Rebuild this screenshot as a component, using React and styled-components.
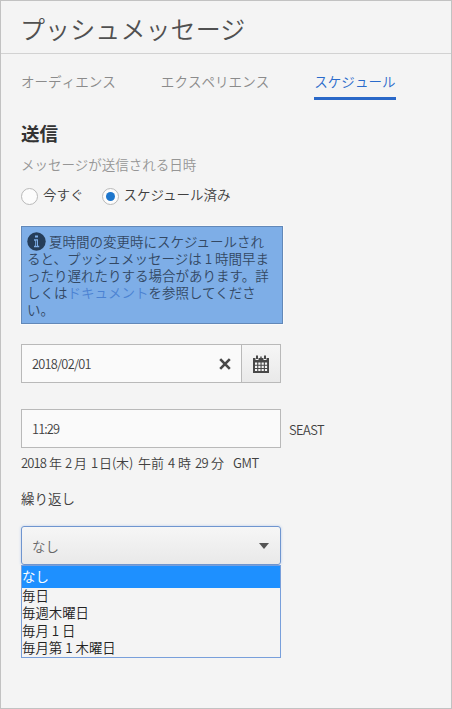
import React from "react";
import styled, { createGlobalStyle } from "styled-components";

const GlobalStyle = createGlobalStyle`
  * { box-sizing: border-box; }
  body {
    margin: 0;
    background: #f4f4f4;
    font-family: "Noto Sans CJK JP", sans-serif;
    font-size: 13.5px;
    font-weight: 350;
    color: #404040;
  }
`;

const Panel = styled.main`
  width: 452px;
  height: 709px;
  background: #f4f4f4;
  border: 1px solid #c2c2c2;
  overflow: hidden;
`;

const Header = styled.header`
  height: 53px;
  padding-left: 19px;
  border-bottom: 1px solid #d2d2d2;
`;

const Title = styled.h1`
  margin: 0;
  font-size: 25px;
  font-weight: 350;
  line-height: 55px;
  letter-spacing: 0.1px;
  color: #505050;
`;

const Tabs = styled.nav`
  display: flex;
  gap: 45px;
  height: 47px;
  padding: 15px 0 0 20px;
`;

const Tab = styled.a`
  height: 31px;
  line-height: 25px;
  font-size: 13.55px;
  font-kerning: none;
  white-space: nowrap;
  color: ${(p) => (p.$active ? "#2a6bcb" : "#8b8b8b")};
  border-bottom: ${(p) => (p.$active ? "3px solid #2a68c8" : "none")};
`;

const Content = styled.section`
  display: flex;
  flex-direction: column;
  align-items: flex-start;
  padding-left: 20px;
`;

const Heading = styled.h2`
  margin: 19px 0 0;
  font-size: 18.5px;
  font-weight: 700;
  line-height: 26px;
  color: #333;
`;

const Caption = styled.p`
  margin: 5px 0 0;
  line-height: 26px;
  color: #969696;
`;

const RadioRow = styled.div`
  display: flex;
  gap: 18px;
  height: 26px;
  margin-top: 5px;
`;

const RadioLabel = styled.label`
  display: flex;
  gap: 5px;
  line-height: 25px;
`;

const RadioMark = styled.span`
  display: flex;
  align-items: center;
  justify-content: center;
  width: 17px;
  height: 17px;
  margin-top: 6px;
  border: 1px solid #b9b9b9;
  border-radius: 50%;
  background: #fcfcfc;

  &::after {
    content: "";
    width: 9px;
    height: 9px;
    border-radius: 50%;
    background: ${(p) => (p.$checked ? "#1d76cc" : "transparent")};
  }
`;

const Notice = styled.div`
  width: 262px;
  height: 98px;
  margin-top: 18px;
  padding: 6px 5px;
  border: 1px solid #6288b8;
  background: #7eaee7;
  line-height: 17px;
  color: #334863;
  outline: 1px solid #fafafa;
`;

const NoticeLine = styled.div`
  display: flex;
  height: 17px;
  white-space: nowrap;
`;

const InfoIcon = styled.svg`
  flex: none;
  width: 19px;
  height: 19px;
  margin: -1px 3px 0 0;
`;

const NoticeLink = styled.a`
  color: #4b82d2;
`;

const Field = styled.div`
  display: flex;
  width: 260px;
  height: 39px;
  border: 1px solid #b9b9b9;
  background: #fafafa;
`;

const DateField = styled(Field)`
  margin-top: 20px;
`;

const FieldValue = styled.span`
  flex: 1;
  padding-left: 10px;
  line-height: 38px;
  font-size: 12.8px;
  letter-spacing: ${(p) => p.$tracking};
`;

const ClearIcon = styled.svg`
  width: 12px;
  height: 12px;
  margin: 13px 10px 0 0;
`;

const CalendarButton = styled.button`
  display: flex;
  align-items: center;
  justify-content: center;
  width: 39px;
  height: 37px;
  padding: 0;
  border: 0;
  border-left: 1px solid #b9b9b9;
  background: linear-gradient(#f6f6f6, #e9e9e9);
`;

const TimeRow = styled.div`
  display: flex;
  gap: 8px;
  height: 39px;
  margin-top: 26px;
`;

const Zone = styled.span`
  font-size: 12.8px;
  line-height: 41px;
  letter-spacing: -0.5px;
`;

const Summary = styled.p`
  display: flex;
  height: 24px;
  margin: 3px 0 0;
  font-size: 13px;
  line-height: 24px;
  white-space: pre;
`;

const SummaryPart = styled.span`
  width: ${(p) => p.$width}px;
  letter-spacing: ${(p) => p.$tracking || "0"};
`;

const RepeatLabel = styled.label`
  margin-top: 10px;
  line-height: 26px;
`;

const SelectButton = styled.div`
  display: flex;
  align-items: center;
  justify-content: space-between;
  width: 260px;
  height: 39px;
  margin-top: 15px;
  padding: 0 11px 0 10px;
  border: 1px solid #6f95cf;
  border-radius: 3px;
  box-shadow: 0 0 3px #b9cdec;
  background: linear-gradient(#f6f6f6, #e9e9e9);
  color: #666;
`;

const Options = styled.ul`
  width: 260px;
  height: 93px;
  margin: 0;
  padding: 0;
  list-style: none;
  border: 1px solid #789fdb;
  background: #f4f4f4;
  color: #222;
`;

const Option = styled.li`
  height: ${(p) => (p.$selected ? 22 : 17.3)}px;
  line-height: ${(p) => (p.$selected ? 20 : 15)}px;
  font-size: 13.4px;
  white-space: pre;
  background: ${(p) => (p.$selected ? "#1e90ff" : "transparent")};
  color: ${(p) => (p.$selected ? "#fff" : "inherit")};
  font-weight: ${(p) => (p.$selected ? 400 : 350)};
`;

const summary = [
  { text: "2018", width: 28, tracking: "-0.9px" },
  { text: "年", width: 16 },
  { text: "2", width: 9 },
  { text: "月", width: 17 },
  { text: "1", width: 8 },
  { text: "日(木)", width: 39, tracking: "-0.1px" },
  { text: "午前", width: 30 },
  { text: "4", width: 10 },
  { text: "時", width: 17 },
  { text: "29", width: 16, tracking: "-0.6px" },
  { text: "分", width: 22 },
  { text: "GMT", width: 30, tracking: "-0.4px" },
];

const repeatOptions = ["なし", "毎日", "毎週木曜日", "毎月 1 日", "毎月第 1 木曜日"];

export default function App() {
  return (
    <>
      <GlobalStyle />
      <Panel>
        <Header>
          <Title>プッシュメッセージ</Title>
        </Header>
        <Tabs>
          <Tab>オーディエンス</Tab>
          <Tab>エクスペリエンス</Tab>
          <Tab $active>スケジュール</Tab>
        </Tabs>
        <Content>
          <Heading>送信</Heading>
          <Caption>メッセージが送信される日時</Caption>
          <RadioRow>
            <RadioLabel>
              <RadioMark />
              今すぐ
            </RadioLabel>
            <RadioLabel>
              <RadioMark $checked />
              スケジュール済み
            </RadioLabel>
          </RadioRow>
          <Notice>
            <NoticeLine>
              <InfoIcon viewBox="0 0 19 19">
                <circle cx="9.5" cy="9.5" r="9.2" fill="#253d59" />
                <path d="M8 3.5h3v2H8zM7 7.3h4v6.4h1.2v1.5H7v-1.5h1.2V8.8H7z" fill="#7eaee7" />
                <path d="M9.2 8.5h.8v5.5h-.8z" fill="#253d59" />
              </InfoIcon>
              夏時間の変更時にスケジュールされ
            </NoticeLine>
            <NoticeLine>ると、プッシュメッセージは 1 時間早ま</NoticeLine>
            <NoticeLine>ったり遅れたりする場合があります。詳</NoticeLine>
            <NoticeLine>
              しくは<NoticeLink>ドキュメント</NoticeLink>を参照してくださ
            </NoticeLine>
            <NoticeLine>い。</NoticeLine>
          </Notice>
          <DateField>
            <FieldValue $tracking="-0.75px">2018/02/01</FieldValue>
            <ClearIcon viewBox="0 0 12 12">
              <path d="M1.2 1.2l9.6 9.6M10.8 1.2l-9.6 9.6" stroke="#484848" strokeWidth="2.6" />
            </ClearIcon>
            <CalendarButton aria-label="calendar">
              <svg width="16" height="18" viewBox="0 0 16 18">
                <path
                  d="M0 3h2.5v2h3V3h5v2h3V3H16v15H0zM3 .5h2V4H3zM11 .5h2V4h-2zM7.3 1.5h1.4V4H7.3z"
                  fill="#484848"
                />
                <path
                  d="M2 7.5h2.2v2.2H2zM5.3 7.5h2.2v2.2H5.3zM8.6 7.5h2.2v2.2H8.6zM11.9 7.5h2.2v2.2h-2.2zM2 10.7h2.2v2.2H2zM5.3 10.7h2.2v2.2H5.3zM8.6 10.7h2.2v2.2H8.6zM11.9 10.7h2.2v2.2h-2.2zM2 13.9h2.2v2.2H2zM5.3 13.9h2.2v2.2H5.3zM8.6 13.9h2.2v2.2H8.6zM11.9 13.9h2.2v2.2h-2.2z"
                  fill="#f5f5f5"
                />
              </svg>
            </CalendarButton>
          </DateField>
          <TimeRow>
            <Field>
              <FieldValue $tracking="-0.9px">11:29</FieldValue>
            </Field>
            <Zone>SEAST</Zone>
          </TimeRow>
          <Summary>
            {summary.map((part, i) => (
              <SummaryPart key={i} $width={part.width} $tracking={part.tracking}>
                {part.text}
              </SummaryPart>
            ))}
          </Summary>
          <RepeatLabel>繰り返し</RepeatLabel>
          <SelectButton>
            <span>なし</span>
            <svg width="10" height="6" viewBox="0 0 10 6">
              <path d="M0 0h10L5 6z" fill="#555" />
            </svg>
          </SelectButton>
          <Options>
            {repeatOptions.map((label, i) => (
              <Option key={label} $selected={i === 0}>
                {label}
              </Option>
            ))}
          </Options>
        </Content>
      </Panel>
    </>
  );
}
